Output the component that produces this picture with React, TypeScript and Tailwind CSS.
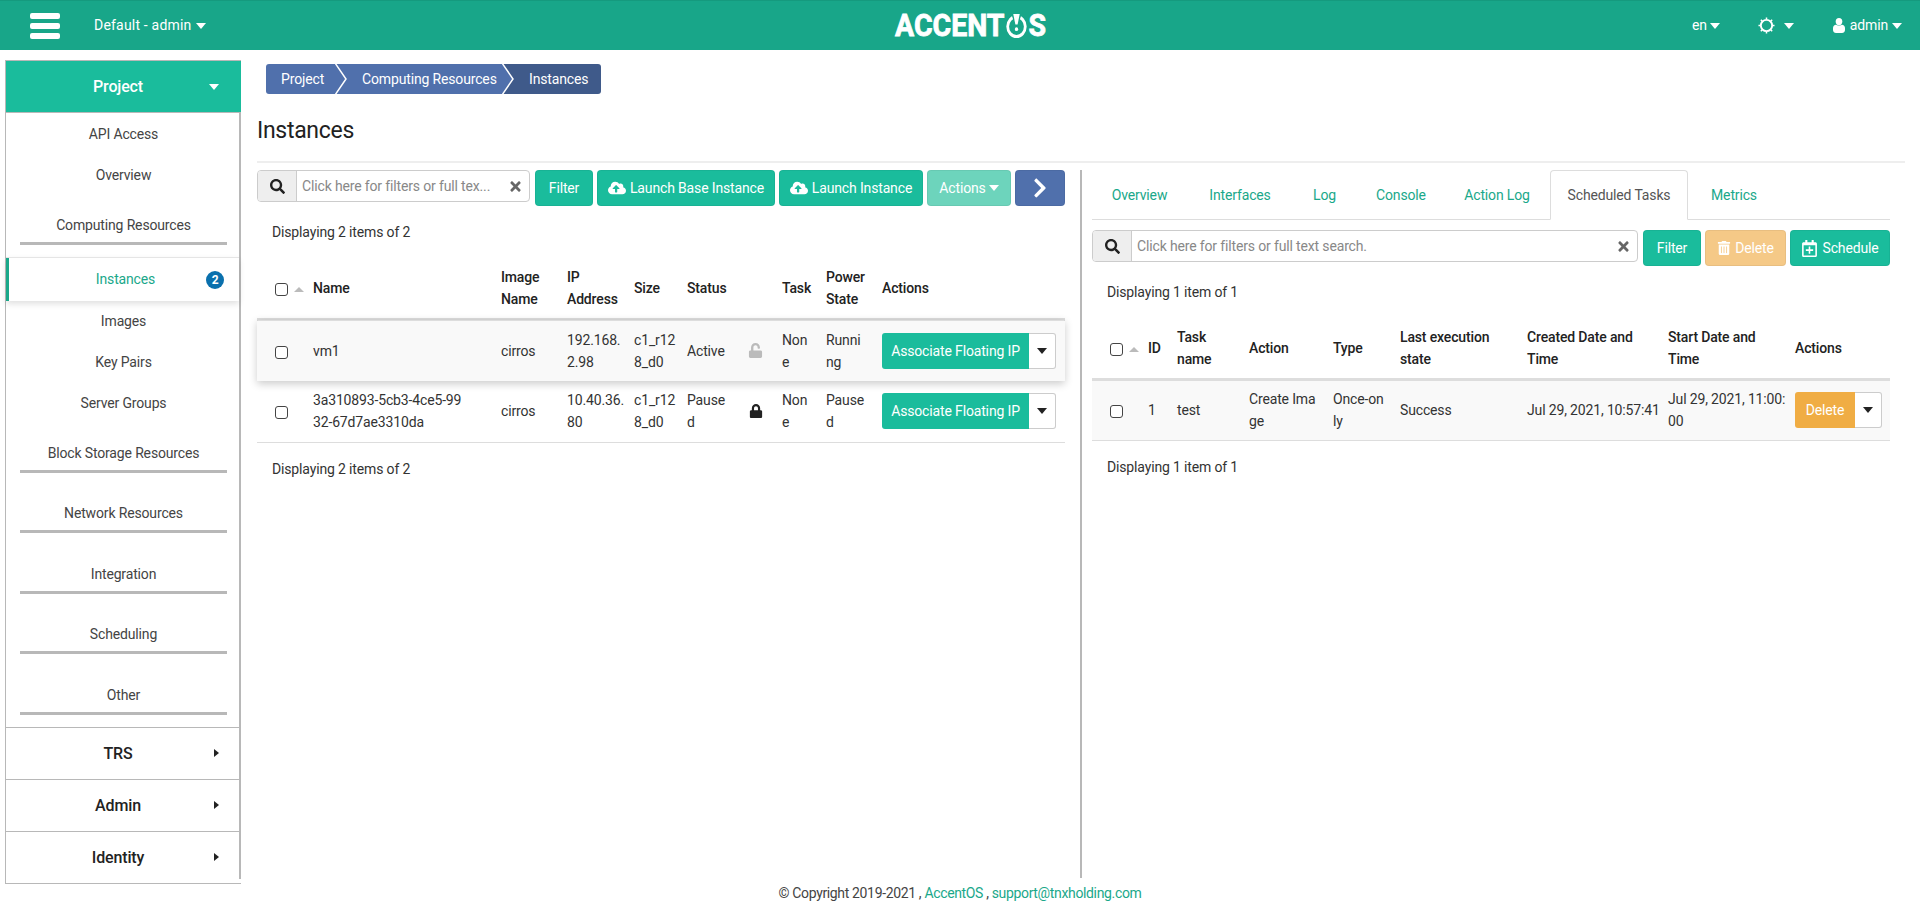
import React from "react";
import {
  FaSearch, FaTimes, FaCloudUploadAlt, FaChevronRight, FaTrashAlt, FaRegCalendarPlus,
  FaLock, FaUnlock,
} from "react-icons/fa";

function Check() {
  return <span className="inline-block w-[13px] h-[13px] rounded-[3px] border border-[#444] bg-white align-middle" />;
}

function SortArrow() {
  return <span className="inline-block ml-[6px] w-0 h-0 border-x-[5px] border-x-transparent border-b-[5px] border-b-[#bbb] align-middle" />;
}

function Caret({ cls }: { cls?: string }) {
  return <span className={"inline-block w-0 h-0 border-x-[5px] border-x-transparent border-t-[6px] border-t-current shrink-0 " + (cls ?? "")} />;
}

function CaretR({ cls }: { cls?: string }) {
  return <span className={"inline-block w-0 h-0 border-y-[4px] border-y-transparent border-l-[5px] border-l-current shrink-0 " + (cls ?? "")} />;
}

function SubHead({ label, cls }: { label: string; cls: string }) {
  return (
    <div className={cls}>
      <div className="text-center text-[#444] leading-[20px]">{label}</div>
      <div className="mx-[14px] mt-[7px] h-[3px] bg-[#b8b8b8]" />
    </div>
  );
}

function NavItem({ label, cls }: { label: string; cls: string }) {
  return <div className={"flex items-center justify-center text-[#444] " + cls}>{label}</div>;
}

function Group({ label }: { label: string }) {
  return (
    <div className="h-[52px] border-t border-[#b8b8b8] flex items-center relative font-medium text-[16px] text-[#222]">
      <span className="w-full text-center pr-[11px]">{label}</span>
      <CaretR cls="absolute right-[22px] top-[21px] text-[#222]" />
    </div>
  );
}

function Sidebar() {
  return (
    <aside className="ml-[5px] mt-[10px] w-[236px] h-[824px] shrink-0 relative border-l border-b border-t border-[#b8b8b8]">
      <div className="absolute right-0 top-0 h-[818px] w-[2px] bg-[#b8b8b8]" />
      <div className="h-[52px] bg-[#1abc9c] text-white font-medium text-[16px] flex items-center justify-center relative border-b border-[#b8b8b8]">
        <span className="pr-[11px]">Project</span>
        <Caret cls="absolute right-[22px] top-[23px]" />
      </div>
      <NavItem label="API Access" cls="h-[41px] pt-[1px]" />
      <NavItem label="Overview" cls="h-[42px]" />
      <SubHead label="Computing Resources" cls="pt-[19px] h-[61px]" />
      <div className="relative h-[44px] border-t border-[#e5e5e5] flex items-center justify-center shadow-[0_3px_6px_rgba(0,0,0,0.12)] text-[#1aa88a] mr-[2px]">
        <span className="absolute left-0 top-0 bottom-0 w-[3px] bg-[#1aa88a]" />
        <span className="pl-[6px]">Instances</span>
        <span className="absolute right-[15px] top-[13px] w-[18px] h-[18px] rounded-full bg-[#0a70ad] text-white text-[12px] font-bold flex items-center justify-center">2</span>
      </div>
      <NavItem label="Images" cls="h-[41px]" />
      <NavItem label="Key Pairs" cls="h-[41px]" />
      <NavItem label="Server Groups" cls="h-[41px]" />
      <SubHead label="Block Storage Resources" cls="pt-[19px] h-[69px]" />
      <SubHead label="Network Resources" cls="pt-[10px] h-[61px]" />
      <SubHead label="Integration" cls="pt-[10px] h-[61px]" />
      <SubHead label="Scheduling" cls="pt-[9px] h-[61px]" />
      <SubHead label="Other" cls="pt-[9px] h-[51px]" />
      <Group label="TRS" />
      <Group label="Admin" />
      <Group label="Identity" />
    </aside>
  );
}

function Btn({ cls, children }: { cls: string; children: React.ReactNode }) {
  return (
    <span className={"h-[36px] rounded-[4px] flex items-center justify-center text-white border border-black/5 shrink-0 whitespace-nowrap " + cls}>{children}</span>
  );
}

function SearchBox({ text, cls }: { text: string; cls: string }) {
  return (
    <div className={"h-[32px] flex rounded-[4px] border border-[#ccc] overflow-hidden shrink-0 " + cls}>
      <span className="w-[39px] shrink-0 bg-[#eee] border-r border-[#ccc] flex items-center justify-center text-[#222]">
        <FaSearch className="text-[15px]" />
      </span>
      <span className="flex-1 pl-[5px] pr-[6px] flex items-center justify-between text-[#888] min-w-0">
        <span className="whitespace-nowrap">{text}</span>
        <FaTimes className="text-[15px] text-[#666] shrink-0" />
      </span>
    </div>
  );
}

function Split({ label, cls, w }: { label: string; cls: string; w: string }) {
  return (
    <span className="flex h-[36px] w-full">
      <span className={"rounded-l-[3px] text-white flex items-center justify-center whitespace-nowrap " + cls + " " + w}>{label}</span>
      <span className="w-[27px] border border-l-0 border-[#ccc] rounded-r-[3px] bg-white flex items-center justify-center text-[#222]">
        <Caret />
      </span>
    </span>
  );
}

const th = "text-left align-middle p-0 text-[#222] font-medium whitespace-nowrap";
const td = "p-0 align-middle text-[#333] whitespace-nowrap";
const lnk = "text-[#1aa88a]";

function LeftTable() {
  const rows = [
    { name: <>vm1</>, ip: <>192.168.<br />2.98</>, status: <>Active</>, power: <>Runni<br />ng</>, locked: false },
    { name: <>3a310893-5cb3-4ce5-99<br />32-67d7ae3310da</>, ip: <>10.40.36.<br />80</>, status: <>Pause<br />d</>, power: <>Pause<br />d</>, locked: true },
  ];
  return (
    <table className="table-fixed w-[808px] border-collapse leading-[22px]">
      <colgroup>
        <col className="w-[56px]" /><col className="w-[188px]" /><col className="w-[66px]" /><col className="w-[67px]" />
        <col className="w-[53px]" /><col className="w-[61px]" /><col className="w-[34px]" /><col className="w-[44px]" />
        <col className="w-[56px]" /><col className="w-[183px]" />
      </colgroup>
      <thead>
        <tr className="h-[61px] border-b-[3px] border-[#ddd]">
          <th className={th + " pl-[18px]"}><Check /><SortArrow /></th>
          <th className={th}>Name</th>
          <th className={th}>Image<br />Name</th>
          <th className={th}>IP<br />Address</th>
          <th className={th}>Size</th>
          <th className={th}>Status</th>
          <th className={th}></th>
          <th className={th}>Task</th>
          <th className={th}>Power<br />State</th>
          <th className={th}>Actions</th>
        </tr>
      </thead>
      <tbody>
        {rows.map((r, i) => (
          <tr key={i} className={i === 0 ? "h-[62px] bg-[#f9f9f9] shadow-[0_3px_8px_rgba(0,0,0,0.2)] relative" : "h-[61px] border-b border-[#ddd]"}>
            <td className={td + " pl-[18px]"}><Check /></td>
            <td className={td + " " + lnk}>{r.name}</td>
            <td className={td}>cirros</td>
            <td className={td}>{r.ip}</td>
            <td className={td + " " + lnk}>c1_r12<br />8_d0</td>
            <td className={td}>{r.status}</td>
            <td className={td}>
              {r.locked ? <FaLock className="text-[14px] text-[#222] ml-[1px]" /> : <FaUnlock className="text-[15px] text-[#bbb]" />}
            </td>
            <td className={td}>Non<br />e</td>
            <td className={td}>{r.power}</td>
            <td className={td + " pr-[9px]"}><Split label="Associate Floating IP" cls="bg-[#1abc9c]" w="w-[147px]" /></td>
          </tr>
        ))}
      </tbody>
    </table>
  );
}

function RightTable() {
  return (
    <table className="table-fixed w-[798px] border-collapse leading-[22px]">
      <colgroup>
        <col className="w-[56px]" /><col className="w-[29px]" /><col className="w-[72px]" /><col className="w-[84px]" />
        <col className="w-[67px]" /><col className="w-[127px]" /><col className="w-[141px]" /><col className="w-[127px]" />
        <col className="w-[95px]" />
      </colgroup>
      <thead>
        <tr className="h-[61px] border-b-[3px] border-[#ddd]">
          <th className={th + " pl-[18px]"}><Check /><SortArrow /></th>
          <th className={th}>ID</th>
          <th className={th}>Task<br />name</th>
          <th className={th}>Action</th>
          <th className={th}>Type</th>
          <th className={th}>Last execution<br />state</th>
          <th className={th}>Created Date and<br />Time</th>
          <th className={th}>Start Date and<br />Time</th>
          <th className={th}>Actions</th>
        </tr>
      </thead>
      <tbody>
        <tr className="h-[61px] bg-[#f9f9f9] border-b border-[#ddd]">
          <td className={td + " pl-[18px]"}><Check /></td>
          <td className={td}>1</td>
          <td className={td}>test</td>
          <td className={td}>Create Ima<br />ge</td>
          <td className={td}>Once-on<br />ly</td>
          <td className={td}>Success</td>
          <td className={td}>Jul 29, 2021, 10:57:41</td>
          <td className={td}>Jul 29, 2021, 11:00:<br />00</td>
          <td className={td + " pr-[8px]"}><Split label="Delete" cls="bg-[#f0ad44]" w="w-[60px]" /></td>
        </tr>
      </tbody>
    </table>
  );
}

function Tab({ label, active, cls }: { label: string; active?: boolean; cls: string }) {
  return (
    <span className={"h-[50px] flex items-center justify-center whitespace-nowrap -mb-px shrink-0 " + cls + " " + (active ? "border border-[#ddd] border-b-white rounded-t-[4px] text-[#555] bg-white" : "text-[#1aa88a]")}>
      {label}
    </span>
  );
}

function Chev({ fill }: { fill: string }) {
  return (
    <svg viewBox="0 0 12 30" className="absolute -right-[12px] top-0 w-[12px] h-[30px] z-10">
      <path d="M0 -1L11 15L0 31" fill={fill} stroke="white" strokeWidth="1.5" />
    </svg>
  );
}

export default function App() {
  return (
    <div className="w-[1920px] h-[906px] overflow-hidden bg-white flex flex-col font-['Roboto',sans-serif] text-[14px] tracking-[-0.15px]">
      <header className="h-[50px] shrink-0 bg-[#18a689] border-t border-[#159a7e] flex items-center text-white relative pl-[30px]">
        <div className="w-[30px] flex flex-col gap-[4px]">
          <span className="h-[6px] rounded-[2px] bg-white" />
          <span className="h-[6px] rounded-[2px] bg-white" />
          <span className="h-[6px] rounded-[2px] bg-white" />
        </div>
        <span className="ml-[34px] tracking-[0.2px]">Default - admin</span>
        <Caret cls="ml-[4px]" />
        <div className="absolute left-[895px] top-[9px] flex items-center h-[30px] text-[32px] font-bold leading-none tracking-normal [-webkit-text-stroke:0.8px_white] origin-left scale-x-[0.89]">
          <span>ACCENT</span>
          <svg viewBox="0 0 24 24" className="w-[25px] h-[25px] mx-[1px]" fill="white">
            <circle cx="12" cy="13" r="9.5" fill="none" stroke="white" strokeWidth="3" />
            <path d="M6 0H18L13.5 11.5H10.5Z" fill="#18a689" />
            <path d="M8.5 1H15.5L13.2 11H10.8Z" />
            <circle cx="12" cy="15.5" r="1.8" />
          </svg>
          <span>S</span>
        </div>
        <div className="absolute left-[1692px] top-0 h-full flex items-center">
          <span>en</span>
          <Caret cls="ml-[3px]" />
          <svg viewBox="0 0 18 18" className="ml-[38px] w-[17px] h-[17px]" fill="none" stroke="white">
            <circle cx="9" cy="9" r="6" strokeWidth="2" />
            <path d="M9 0.5V2.5M9 15.5V17.5M0.5 9H2.5M15.5 9H17.5M3 3L4.4 4.4M15 3L13.6 4.4M3 15L4.4 13.6M15 15L13.6 13.6" strokeWidth="1.6" />
          </svg>
          <Caret cls="ml-[9px]" />
          <svg viewBox="0 0 12 15" className="ml-[39px] w-[12px] h-[15px]" fill="white">
            <ellipse cx="6" cy="3.6" rx="3.3" ry="3.6" />
            <path d="M0 12V10C0 8 1.4 7 3 6.8C4 7.7 8 7.7 9 6.8C10.6 7 12 8 12 10V12C12 14 10.5 15 9 15H3C1.5 15 0 14 0 12Z" />
          </svg>
          <span className="ml-[5px]">admin</span>
          <Caret cls="ml-[4px]" />
        </div>
      </header>
      <div className="flex h-[834px] shrink-0">
        <Sidebar />
        <main className="ml-[16px] w-[1648px] shrink-0">
          <nav className="mt-[14px] ml-[9px] h-[30px] w-[335px] flex items-stretch text-white">
            <span className="bg-[#5070ac] w-[69px] pl-[15px] flex items-center relative rounded-l-[3px]">
              Project
              <Chev fill="#5070ac" />
            </span>
            <span className="bg-[#5070ac] w-[167px] pl-[27px] flex items-center relative whitespace-nowrap">
              Computing Resources
              <Chev fill="#5070ac" />
            </span>
            <span className="bg-[#3f5a8a] w-[99px] pl-[27px] flex items-center rounded-r-[3px]">Instances</span>
          </nav>
          <h1 className="mt-[23px] text-[23px] tracking-[-0.3px] font-normal leading-[28px] text-[#222]">Instances</h1>
          <div className="mt-[16px] h-[2px] bg-[#eee] w-[1648px]" />
          <div className="mt-[7px] flex">
            <section className="w-[808px] shrink-0">
              <div className="flex items-start gap-[4px]">
                <SearchBox text="Click here for filters or full tex..." cls="w-[273px] mr-[1px]" />
                <Btn cls="bg-[#1abc9c] w-[58px]">Filter</Btn>
                <Btn cls="bg-[#1abc9c] w-[178px] gap-[4px]"><FaCloudUploadAlt className="text-[18px]" />Launch Base Instance</Btn>
                <Btn cls="bg-[#1abc9c] w-[144px] gap-[4px]"><FaCloudUploadAlt className="text-[18px]" />Launch Instance</Btn>
                <Btn cls="bg-[#6dd4bc] w-[84px] gap-[3px]">Actions<Caret /></Btn>
                <Btn cls="bg-[#5070ac] w-[50px]"><FaChevronRight className="text-[22px]" /></Btn>
              </div>
              <div className="mt-[16px] ml-[15px] h-[20px] leading-[20px] text-[#333]">Displaying 2 items of 2</div>
              <div className="mt-[16px]"><LeftTable /></div>
              <div className="mt-[16px] ml-[15px] h-[20px] leading-[20px] text-[#333]">Displaying 2 items of 2</div>
            </section>
            <div className="ml-[15px] w-[2px] h-[708px] bg-[#b8b8b8] shrink-0" />
            <section className="ml-[10px] w-[798px] shrink-0">
              <div className="flex h-[50px] border-b border-[#ddd]">
                <Tab label="Overview" cls="w-[95px]" />
                <Tab label="Interfaces" cls="ml-[2px] w-[102px]" />
                <Tab label="Log" cls="ml-[2px] w-[63px]" />
                <Tab label="Console" cls="ml-[2px] w-[86px]" />
                <Tab label="Action Log" cls="ml-[2px] w-[102px]" />
                <Tab label="Scheduled Tasks" active cls="ml-[2px] w-[138px]" />
                <Tab label="Metrics" cls="ml-[2px] w-[88px]" />
              </div>
              <div className="mt-[10px] flex items-start gap-[4px]">
                <SearchBox text="Click here for filters or full text search." cls="w-[546px] mr-[1px]" />
                <Btn cls="bg-[#1abc9c] w-[58px]">Filter</Btn>
                <Btn cls="bg-[#f5c987] w-[81px] gap-[4px]"><FaTrashAlt className="text-[14px]" />Delete</Btn>
                <Btn cls="bg-[#1abc9c] w-[100px] gap-[4px]"><FaRegCalendarPlus className="text-[17px]" />Schedule</Btn>
              </div>
              <div className="mt-[16px] ml-[15px] h-[20px] leading-[20px] text-[#333]">Displaying 1 item of 1</div>
              <div className="mt-[16px]"><RightTable /></div>
              <div className="mt-[16px] ml-[15px] h-[20px] leading-[20px] text-[#333]">Displaying 1 item of 1</div>
            </section>
          </div>
        </main>
      </div>
      <footer className="flex-1 flex items-center justify-center text-[#444] -mt-[3px] tracking-[-0.35px]">
        © Copyright 2019-2021 ,&nbsp;<span className="text-[#1aa88a]">AccentOS</span>&nbsp;,&nbsp;<span className="text-[#1aa88a]">support@tnxholding.com</span>
      </footer>
    </div>
  );
}
